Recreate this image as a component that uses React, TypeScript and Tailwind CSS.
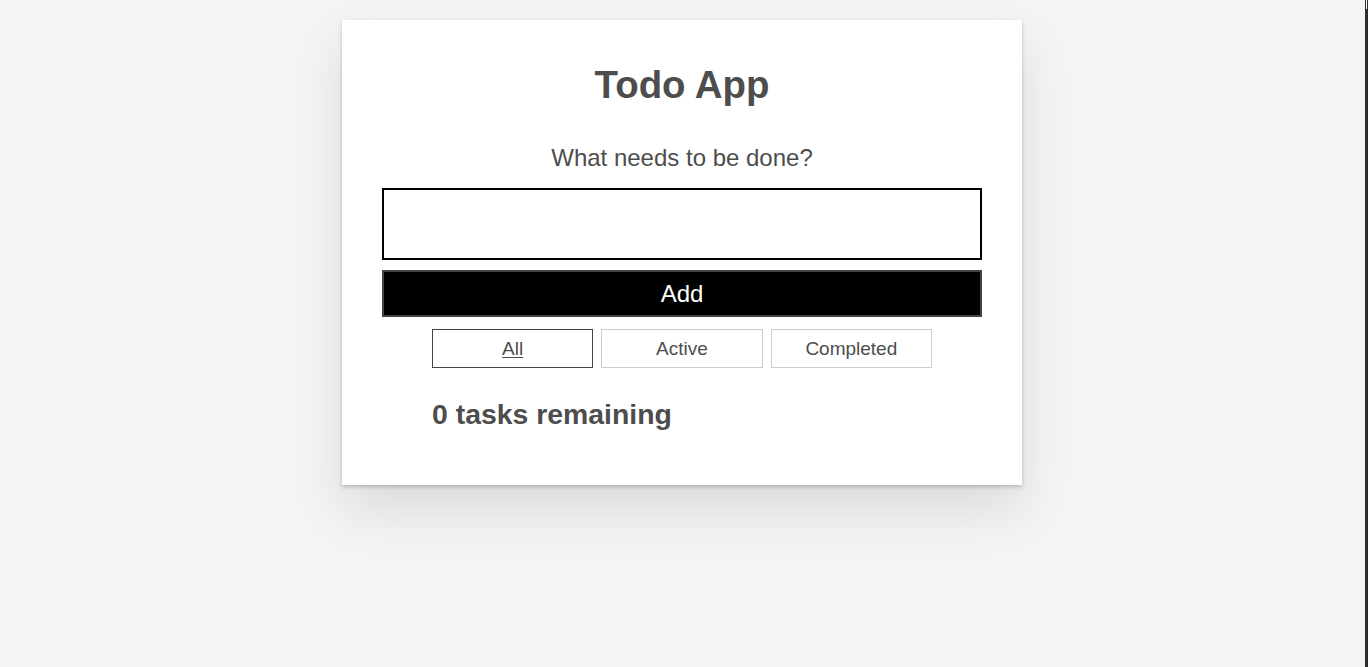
import React, { useState } from "react";

type Filter = "All" | "Active" | "Completed";

interface Task {
  id: number;
  text: string;
  done: boolean;
}

const filters: Filter[] = ["All", "Active", "Completed"];

const App: React.FC = () => {
  const [tasks, setTasks] = useState<Task[]>([]);
  const [text, setText] = useState("");
  const [filter, setFilter] = useState<Filter>("All");

  const addTask = (e: React.FormEvent) => {
    e.preventDefault();
    if (!text.trim()) return;
    setTasks((prev) => [...prev, { id: Date.now(), text, done: false }]);
    setText("");
  };

  const remaining = tasks.filter((t) => !t.done).length;

  return (
    <div className="flex h-[667px] w-full bg-[#f4f4f4] font-['Liberation_Sans',Arial,sans-serif] text-[#4d4d4d]">
      <div className="flex flex-1 justify-center pr-px pt-5">
        <div className="h-fit w-[680px] bg-white px-10 pb-[55px] pt-[43px] shadow-[0_2px_4px_rgba(0,0,0,0.2),0_25px_50px_rgba(0,0,0,0.1)]">
          <h1 className="text-center text-[38.4px] font-bold leading-[44px]">
            Todo App
          </h1>
          <form onSubmit={addTask} className="mt-[37px] flex flex-col">
            <label
              htmlFor="new-todo"
              className="text-center text-[24px] leading-[28px]"
            >
              What needs to be done?
            </label>
            <input
              id="new-todo"
              value={text}
              onChange={(e) => setText(e.target.value)}
              className="mt-4 h-[72px] w-full border-2 border-black px-3 text-[24px] outline-none"
            />
            <button
              type="submit"
              className="mt-[10px] h-[47px] w-full border-2 border-[#444] bg-black text-[24px] text-white"
            >
              Add
            </button>
          </form>
          <div className="mx-auto mt-3 flex w-[500px] gap-2">
            {filters.map((f) => (
              <button
                key={f}
                onClick={() => setFilter(f)}
                className={
                  filter === f
                    ? "h-[39px] flex-1 border border-[#444] pt-px text-[19px] underline underline-offset-2"
                    : "h-[39px] flex-1 border border-[#ccc] pt-px text-[19px]"
                }
              >
                {f}
              </button>
            ))}
          </div>
          <h2 className="mx-auto mt-[30px] w-[500px] text-[28.4px] font-bold leading-[32px]">
            {remaining} tasks remaining
          </h2>
        </div>
      </div>
      <div className="flex w-[3px] flex-col bg-[#2b2b2b]">
        <div className="ml-[1px] h-[9px] w-[1px] bg-white" />
      </div>
    </div>
  );
};

export default App;
